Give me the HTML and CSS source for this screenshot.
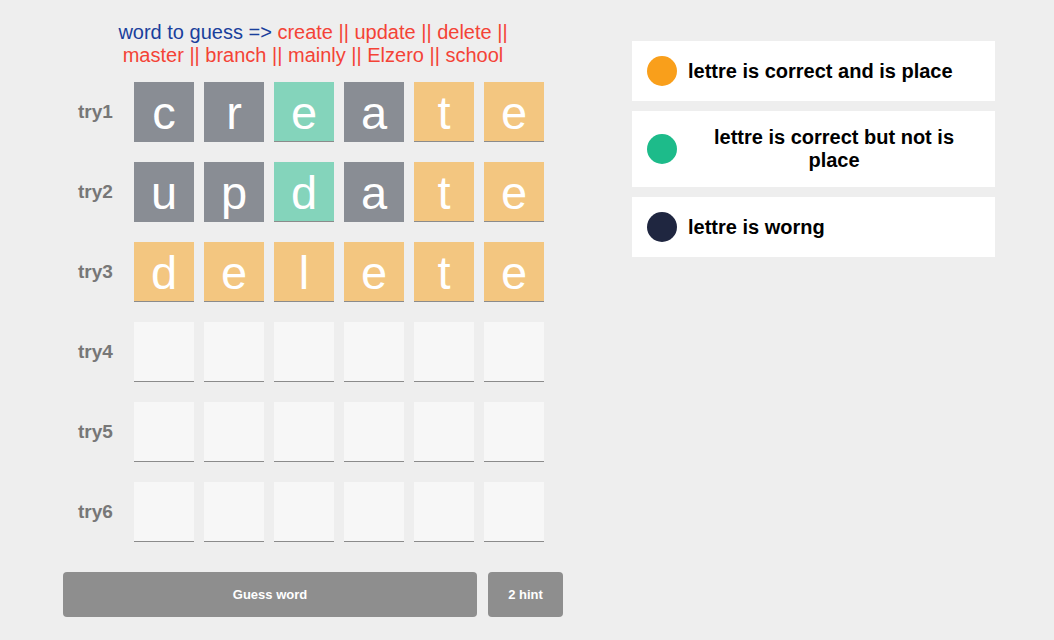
FILE: index.html
```html
<!DOCTYPE html>
<html lang="en">
<head>
<meta charset="utf-8">
<title>Guess the word</title>
<link rel="stylesheet" href="styles.css">
</head>
<body>
<div class="page">
  <section class="game">
    <h1 class="title">
      <span class="line"><span class="lead">word to guess =&gt;</span> <span class="words">create || update || delete ||</span></span>
      <span class="line words">master || branch || mainly || Elzero || school</span>
    </h1>
    <div class="rows">
      <div class="row">
        <span class="label">try1</span>
        <div class="tiles">
          <span class="tile wrong">c</span><span class="tile wrong">r</span><span class="tile near">e</span><span class="tile wrong">a</span><span class="tile right">t</span><span class="tile right">e</span>
        </div>
      </div>
      <div class="row">
        <span class="label">try2</span>
        <div class="tiles">
          <span class="tile wrong">u</span><span class="tile wrong">p</span><span class="tile near">d</span><span class="tile wrong">a</span><span class="tile right">t</span><span class="tile right">e</span>
        </div>
      </div>
      <div class="row">
        <span class="label">try3</span>
        <div class="tiles">
          <span class="tile right">d</span><span class="tile right">e</span><span class="tile right">l</span><span class="tile right">e</span><span class="tile right">t</span><span class="tile right">e</span>
        </div>
      </div>
      <div class="row">
        <span class="label">try4</span>
        <div class="tiles">
          <span class="tile"></span><span class="tile"></span><span class="tile"></span><span class="tile"></span><span class="tile"></span><span class="tile"></span>
        </div>
      </div>
      <div class="row">
        <span class="label">try5</span>
        <div class="tiles">
          <span class="tile"></span><span class="tile"></span><span class="tile"></span><span class="tile"></span><span class="tile"></span><span class="tile"></span>
        </div>
      </div>
      <div class="row">
        <span class="label">try6</span>
        <div class="tiles">
          <span class="tile"></span><span class="tile"></span><span class="tile"></span><span class="tile"></span><span class="tile"></span><span class="tile"></span>
        </div>
      </div>
    </div>
    <div class="actions">
      <button class="btn guess">Guess word</button>
      <button class="btn hint">2 hint</button>
    </div>
  </section>
  <aside class="legend">
    <div class="key">
      <span class="dot dot-orange"></span>
      <span class="key-text">lettre is correct and is place</span>
    </div>
    <div class="key">
      <span class="dot dot-green"></span>
      <span class="key-text centered">lettre is correct but not is place</span>
    </div>
    <div class="key">
      <span class="dot dot-navy"></span>
      <span class="key-text">lettre is worng</span>
    </div>
  </aside>
</div>
</body>
</html>
```

FILE: styles.css
```css
* { box-sizing: border-box; }

html, body {
  margin: 0;
  padding: 0;
  background: #eeeeee;
  font-family: "Liberation Sans", Arial, sans-serif;
}

.page {
  display: flex;
  align-items: flex-start;
  gap: 69px;
  padding-left: 63px;
}

.game {
  width: 500px;
  padding-top: 21px;
  display: flex;
  flex-direction: column;
}

.title {
  margin: 0 auto;
  width: 420px;
  text-align: center;
  font-size: 20px;
  line-height: 23px;
  font-weight: normal;
}

.line { display: block; }

.lead { color: #1a3f9c; }
.words { color: #f44336; }

.rows {
  margin-top: 15px;
  display: flex;
  flex-direction: column;
  gap: 20px;
  padding-left: 15px;
}

.row {
  display: flex;
  align-items: center;
}

.label {
  width: 56px;
  font-size: 19px;
  font-weight: bold;
  color: #777777;
}

.tiles {
  display: flex;
  gap: 10px;
}

.tile {
  width: 60px;
  height: 60px;
  background: #f7f7f7;
  border-bottom: 1px solid #8b8b8b;
  display: flex;
  align-items: center;
  justify-content: center;
  color: #ffffff;
  font-size: 47px;
  line-height: 1;
  padding-top: 2px;
}

.tile.wrong { background: #898d94; border-bottom-color: #898d94; }
.tile.near { background: #84d4bb; }
.tile.right { background: #f3c680; }

.actions {
  margin-top: 30px;
  display: flex;
  gap: 11px;
}

.btn {
  height: 45px;
  border: none;
  border-radius: 4px;
  background: #8e8e8e;
  color: #ffffff;
  font-family: "Liberation Sans", Arial, sans-serif;
  font-size: 13px;
  font-weight: bold;
  padding: 0;
}

.guess { width: 414px; }
.hint { width: 75px; }

.legend {
  margin-top: 41px;
  width: 363px;
  display: flex;
  flex-direction: column;
  gap: 10px;
}

.key {
  background: #ffffff;
  display: flex;
  align-items: center;
  gap: 11px;
  padding: 15px;
  min-height: 59px;
}

.dot {
  flex: none;
  width: 30px;
  height: 30px;
  border-radius: 50%;
}

.dot-orange { background: #f99f1b; }
.dot-green { background: #1dbb8a; }
.dot-navy { background: #1f2640; }

.key-text {
  flex: 1;
  font-size: 20px;
  line-height: 23px;
  font-weight: bold;
  color: #000000;
}

.key-text.centered { text-align: center; }
```
